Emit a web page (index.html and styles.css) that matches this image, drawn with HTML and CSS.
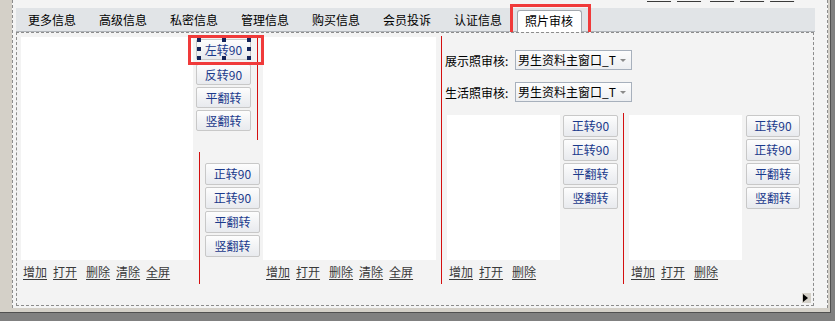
FILE: index.html
```html
<!DOCTYPE html>
<html lang="zh-CN">

<head>
    <meta charset="UTF-8">
    <title>照片审核</title>
    <link rel="stylesheet" href="styles.css">
</head>

<body>
    <div class="win">
        <div class="canvas">
            <div class="toplinks">
                <div class="links">
                    <a>增加</a><a>打开</a><a>删除</a><a>清除</a><a>全屏</a>
                </div>
            </div>

            <div class="tabs">
                <span class="tab">更多信息</span>
                <span class="tab">高级信息</span>
                <span class="tab">私密信息</span>
                <span class="tab">管理信息</span>
                <span class="tab">购买信息</span>
                <span class="tab">会员投诉</span>
                <span class="tab">认证信息</span>
                <span class="tab active">照片审核<i class="mark mark-tab"></i></span>
            </div>

            <div class="body">
                <div class="col col-a">
                    <div class="pic pic-big"></div>
                    <div class="links">
                        <a>增加</a><a>打开</a><a>删除</a><a>清除</a><a>全屏</a>
                    </div>
                </div>

                <div class="side side-a">
                    <span class="btn btn-sm selected">左转90
                        <span class="handles">
                            <i class="h1"></i><i class="h2"></i><i class="h3"></i><i class="h4"></i>
                            <i class="h5"></i><i class="h6"></i><i class="h7"></i><i class="h8"></i>
                        </span>
                        <i class="mark mark-btn"></i>
                    </span>
                    <span class="btn btn-sm">反转90</span>
                    <span class="btn btn-sm">平翻转</span>
                    <span class="btn btn-sm">竖翻转</span>
                </div>

                <div class="side side-b">
                    <span class="btn">正转90</span>
                    <span class="btn">正转90</span>
                    <span class="btn">平翻转</span>
                    <span class="btn">竖翻转</span>
                </div>

                <div class="col col-b">
                    <div class="pic pic-big"></div>
                    <div class="links links-b">
                        <a>增加</a><a>打开</a><a>删除</a><a>清除</a><a>全屏</a>
                    </div>
                </div>

                <div class="group-c">
                    <div class="form">
                        <div class="field">
                            <label>展示照审核:</label>
                            <span class="select">男生资料主窗口_T<i class="caret"></i></span>
                        </div>
                        <div class="field">
                            <label>生活照审核:</label>
                            <span class="select">男生资料主窗口_T<i class="caret"></i></span>
                        </div>
                    </div>
                    <div class="pic-row">
                        <div class="col col-c">
                            <div class="pic pic-small"></div>
                            <div class="links">
                                <a>增加</a><a>打开</a><a>删除</a>
                            </div>
                        </div>
                        <div class="side side-c">
                            <span class="btn">正转90</span>
                            <span class="btn">正转90</span>
                            <span class="btn">平翻转</span>
                            <span class="btn">竖翻转</span>
                        </div>
                    </div>
                </div>

                <div class="group-d">
                    <div class="col col-d">
                        <div class="pic pic-small"></div>
                        <div class="links">
                            <a>增加</a><a>打开</a><a>删除</a>
                        </div>
                    </div>
                    <div class="side side-d">
                        <span class="btn">正转90</span>
                        <span class="btn">正转90</span>
                        <span class="btn">平翻转</span>
                        <span class="btn">竖翻转</span>
                    </div>
                </div>

                <span class="more"></span>
            </div>
        </div>
    </div>
</body>

</html>
```

FILE: styles.css
```css
body {
    margin: 0;
    background-color: #808080;
    font-family: "Noto Sans CJK SC", "Liberation Sans", sans-serif;
    font-size: 12px;
}

.win {
    width: 831px;
    height: 313px;
    box-sizing: border-box;
    padding-left: 12px;
    background-color: #d4d0c8;
    border-right: 1px solid #505050;
    border-bottom: 1px solid #505050;
}

.canvas {
    width: 816px;
    height: 308px;
    box-sizing: border-box;
    background-color: #f4f4f4;
    border-left: 1px dashed #8c8c8c;
    border-right: 1px dashed #8c8c8c;
}

/* links row cut off at the top edge */
.toplinks {
    height: 8px;
    overflow: hidden;
    padding-left: 634px;
}

.toplinks .links {
    margin-top: -14px;
    padding-left: 0;
}

.tabs {
    display: flex;
    align-items: flex-end;
    margin-left: 3px;
    width: 799px;
    height: 23px;
    background-color: #e1e4e7;
    border-bottom: 1px solid #b0b4b9;
}

.tab {
    width: 71px;
    height: 23px;
    box-sizing: border-box;
    padding-left: 12px;
    line-height: 23px;
    color: #000;
    white-space: nowrap;
}

.tab.active {
    position: relative;
    width: 65px;
    height: 22px;
    margin-left: 4px;
    margin-bottom: -1px;
    padding-left: 7px;
    line-height: 19px;
    background-color: #fff;
    border: 1px solid #a3a8ae;
    border-bottom: none;
    border-radius: 3px 3px 0 0;
}

.mark {
    position: absolute;
    box-sizing: border-box;
    border: 3px solid #f03a3a;
}

.mark-tab {
    left: -8px;
    top: -7px;
    width: 81px;
    height: 33px;
}

.body {
    position: relative;
    display: flex;
    align-items: flex-start;
    margin-left: 3px;
    width: 798px;
    height: 274px;
    box-sizing: border-box;
    background-color: #f3f3f3;
    border: 1px dashed #8c8c8c;
}

.col {
    display: flex;
    flex-direction: column;
    flex-shrink: 0;
}

.pic {
    background-color: #fff;
}

.pic-big {
    height: 223px;
}

.pic-small {
    width: 113px;
    height: 145px;
}

.col-a {
    width: 172px;
    margin-left: 4px;
    margin-top: 4px;
}

.col-b {
    width: 173px;
    margin-top: 4px;
}

.links {
    display: flex;
    margin-top: 4px;
    padding-left: 2px;
    line-height: 16px;
    color: #3a3a3a;
    white-space: nowrap;
}

.links a {
    margin-right: 6px;
    text-decoration: underline;
    text-underline-offset: 2px;
}

.links a:nth-child(2) {
    margin-right: 9px;
}

.links-b {
    padding-left: 3px;
}

.side {
    display: flex;
    flex-direction: column;
    gap: 2px;
    flex-shrink: 0;
    box-sizing: border-box;
}

.side-a {
    width: 65px;
    height: 104px;
    margin-top: 3px;
    padding: 3px 0 0 3px;
    border-right: 1px solid #d40f0f;
}

.side-b {
    width: 64px;
    height: 132px;
    margin-left: -59px;
    margin-top: 119px;
    padding: 11px 0 0 5px;
    border-left: 1px solid #d40f0f;
}

.btn {
    display: block;
    width: 55px;
    height: 22px;
    box-sizing: border-box;
    border: 1px solid #c8c8c8;
    border-radius: 2px;
    background: linear-gradient(#fdfdfd, #f2f3f5 50%, #e8eaee);
    color: #1b3a8c;
    text-align: center;
    line-height: 20px;
    white-space: nowrap;
}

.btn-sm {
    height: 21px;
    line-height: 19px;
}

.selected {
    position: relative;
    margin-bottom: 2px;
}

.handles {
    position: absolute;
    left: 2px;
    top: 0;
    width: 50px;
    height: 18px;
}

.handles i {
    position: absolute;
    width: 4px;
    height: 4px;
    margin: -2px 0 0 -2px;
    background-color: #14245a;
}

.handles .h1 { left: 0; top: 0; }
.handles .h2 { left: 50%; top: 0; }
.handles .h3 { left: 100%; top: 0; }
.handles .h4 { left: 0; top: 50%; }
.handles .h5 { left: 100%; top: 50%; }
.handles .h6 { left: 0; top: 100%; }
.handles .h7 { left: 50%; top: 100%; }
.handles .h8 { left: 100%; top: 100%; }

.mark-btn {
    left: -9px;
    top: -5px;
    width: 76px;
    height: 30px;
}

.group-c {
    flex-shrink: 0;
    width: 183px;
    height: 248px;
    box-sizing: border-box;
    margin-left: 5px;
    margin-top: 3px;
    padding-top: 14px;
    border-left: 1px solid #d40f0f;
}

.form {
    display: flex;
    flex-direction: column;
    gap: 12px;
    padding-left: 3px;
}

.field {
    display: flex;
    align-items: center;
    white-space: nowrap;
}

.field label {
    flex-shrink: 0;
    width: 70px;
    color: #000;
}

.select {
    position: relative;
    flex-shrink: 0;
    width: 117px;
    height: 20px;
    box-sizing: border-box;
    padding-left: 2px;
    line-height: 18px;
    color: #000;
    background: linear-gradient(#fdfdfd, #eceef1);
    border: 1px solid #a7b0bc;
}

.caret {
    position: absolute;
    right: 5px;
    top: 8px;
    border-left: 3px solid transparent;
    border-right: 3px solid transparent;
    border-top: 3px solid #8a8a8a;
}

.pic-row {
    display: flex;
    align-items: flex-start;
    margin-top: 11px;
}

.col-c {
    margin-left: 5px;
    margin-top: 2px;
}

.side-c {
    width: 64px;
    height: 171px;
    padding: 2px 0 0 3px;
    border-right: 1px solid #d40f0f;
}

.group-d {
    display: flex;
    align-items: flex-start;
    margin-left: 5px;
    margin-top: 82px;
}

.side-d {
    margin-left: 4px;
}

.side-d .btn {
    width: 54px;
}

.more {
    position: absolute;
    right: 2px;
    bottom: 2px;
    width: 9px;
    height: 10px;
    box-sizing: border-box;
    padding: 1px 0 0 1px;
    background-color: #d4d0c8;
}

.more::before {
    content: "";
    display: block;
    border-left: 5px solid #000;
    border-top: 4px solid transparent;
    border-bottom: 4px solid transparent;
}
```
